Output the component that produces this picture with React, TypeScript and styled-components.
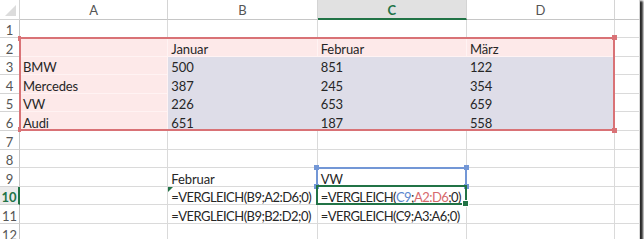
import React from "react";
import styled, { createGlobalStyle, css } from "styled-components";

const Global = createGlobalStyle`
  html, body { margin: 0; padding: 0; background: #ffffff; }
  body { font-family: Lato, "Open Sans", sans-serif; }
`;

const Frame = styled.div`
  width: 640px;
  height: 239px;
  overflow: hidden;
  background: #fff;
  box-shadow: 2px 2px 2px 1px #2a2a2a;
`;

const Sheet = styled.div`
  display: grid;
  grid-template-columns: 20px 148.3px 149.4px 149.2px 148.3px 25px;
  grid-template-rows: 19.5px repeat(12, 18.6px);
  position: relative;
`;

const Corner = styled.div`
  position: relative;
  box-sizing: border-box;
  border-right: 1px solid #d4d4d4;
  border-bottom: 1px solid #d4d4d4;
  background: #fff;
  &::after {
    content: "";
    position: absolute;
    right: 3px;
    bottom: 3px;
    width: 0;
    height: 0;
    border-left: 11px solid transparent;
    border-bottom: 11px solid #dcdcdc;
  }
`;

const ColHead = styled.div<{ $active?: boolean }>`
  box-sizing: border-box;
  display: flex;
  align-items: flex-end;
  justify-content: center;
  padding-bottom: 2px;
  line-height: 13px;
  font-size: 13px;
  color: #555;
  background: #fff;
  border-right: 1px solid #d4d4d4;
  border-bottom: 1px solid #c6c6c6;
  ${(p) =>
    p.$active &&
    css`
      background: #e1e1e1;
      color: #217346;
      font-weight: 700;
      border-bottom: 2px solid #217346;
      padding-bottom: 1px;
    `}
`;

const RowHead = styled.div<{ $active?: boolean }>`
  box-sizing: border-box;
  display: flex;
  align-items: flex-end;
  justify-content: center;
  line-height: 13px;
  padding-bottom: 0;
  font-size: 13px;
  color: #555;
  background: #fff;
  border-right: 1px solid #c6c6c6;
  border-bottom: 1px solid #d4d4d4;
  ${(p) =>
    p.$active &&
    css`
      background: #ececec;
      color: #217346;
      font-weight: 700;
      border-right: 2px solid #217346;
    `}
`;

type Fill = "none" | "pink" | "lav";

const Cell = styled.div<{ $fill?: Fill; $formula?: boolean }>`
  box-sizing: border-box;
  position: relative;
  display: flex;
  align-items: flex-end;
  padding: 0 0 0 3px;
  line-height: 13px;
  font-size: 13px;
  letter-spacing: ${(p) => (p.$formula ? "-0.55px" : "-0.1px")};
  color: #262626;
  white-space: nowrap;
  overflow: visible;
  border-right: 1px solid #dadada;
  border-bottom: 1px solid #dadada;
  ${(p) =>
    p.$fill === "pink" &&
    css`
      background: #fde9e9;
      border-color: #fff3f3;
    `}
  ${(p) =>
    p.$fill === "lav" &&
    css`
      background: #dedde8;
      border-color: #dedde8;
    `}
`;

const ErrorMark = styled.span`
  position: absolute;
  left: 0;
  top: 0;
  width: 0;
  height: 0;
  border-top: 5px solid #217346;
  border-right: 5px solid transparent;
`;

const Ref = styled.span<{ $c: string }>`
  color: ${(p) => p.$c};
`;

const Box = styled.div<{ $r: string; $c: string; $color: string; $w: number }>`
  grid-row: ${(p) => p.$r};
  grid-column: ${(p) => p.$c};
  position: relative;
  z-index: 2;
  pointer-events: none;
  margin: -1.5px 0 0 -1.5px;
  border: ${(p) => p.$w}px solid ${(p) => p.$color};
`;

const Handle = styled.span<{ $color: string; $pos: string }>`
  position: absolute;
  width: 5px;
  height: 5px;
  background: ${(p) => p.$color};
  ${(p) => p.$pos}
`;

const FillHandle = styled.span`
  position: absolute;
  right: -4px;
  bottom: -4px;
  width: 5px;
  height: 5px;
  background: #217346;
  border: 1px solid #fff;
`;

const cols = ["A", "B", "C", "D", ""];

type Row = { n: number; cells: React.ReactNode[]; fills?: Fill[] };

const rows: Row[] = [
  { n: 1, cells: ["", "", "", "", ""] },
  { n: 2, cells: ["", "Januar", "Februar", "März", ""], fills: ["pink", "pink", "pink", "pink", "none"] },
  { n: 3, cells: ["BMW", "500", "851", "122", ""], fills: ["pink", "lav", "lav", "lav", "none"] },
  { n: 4, cells: ["Mercedes", "387", "245", "354", ""], fills: ["pink", "lav", "lav", "lav", "none"] },
  { n: 5, cells: ["VW", "226", "653", "659", ""], fills: ["pink", "lav", "lav", "lav", "none"] },
  { n: 6, cells: ["Audi", "651", "187", "558", ""], fills: ["pink", "lav", "lav", "lav", "none"] },
  { n: 7, cells: ["", "", "", "", ""] },
  { n: 8, cells: ["", "", "", "", ""] },
  { n: 9, cells: ["", "Februar", "VW", "", ""] },
  {
    n: 10,
    cells: [
      "",
      <>
        <ErrorMark />
        =VERGLEICH(B9;A2:D6;0)
      </>,
      <>
        =VERGLEICH(<Ref $c="#5b87cf">C9</Ref>;<Ref $c="#d7696c">A2:D6</Ref>;0)
      </>,
      "",
      "",
    ],
  },
  { n: 11, cells: ["", "=VERGLEICH(B9;B2:D2;0)", "=VERGLEICH(C9;A3:A6;0)", "", ""] },
  { n: 12, cells: ["", "", "", "", ""] },
];

export default function App() {
  return (
    <>
      <Global />
      <Frame>
        <Sheet>
          <Corner />
          {cols.map((c, i) => (
            <ColHead key={i} $active={c === "C"}>
              {c}
            </ColHead>
          ))}
          {rows.map((r) => (
            <React.Fragment key={r.n}>
              <RowHead $active={r.n === 10}>{r.n}</RowHead>
              {r.cells.map((v, i) => (
                <Cell
                  key={i}
                  $fill={r.fills ? r.fills[i] : "none"}
                  $formula={r.n >= 10}
                  style={{ gridRow: r.n + 1, gridColumn: i + 2 }}
                >
                  {v}
                </Cell>
              ))}
            </React.Fragment>
          ))}
          <Box $r="3 / 8" $c="2 / 6" $color="#d97276" $w={2}>
            <Handle $color="#d97276" $pos="left:-3px;top:-3px;width:3px;" />
            <Handle $color="#d97276" $pos="right:-4px;top:-4px;" />
            <Handle $color="#d97276" $pos="left:-3px;bottom:-3px;width:3px;" />
            <Handle $color="#d97276" $pos="right:-4px;bottom:-4px;" />
          </Box>
          <Box $r="10 / 11" $c="4 / 5" $color="#7397d6" $w={2}>
            <Handle $color="#7397d6" $pos="left:-4px;top:-4px;" />
            <Handle $color="#7397d6" $pos="right:-4px;top:-4px;" />
            <Handle $color="#7397d6" $pos="left:-4px;bottom:-4px;" />
            <Handle $color="#7397d6" $pos="right:-4px;bottom:-4px;" />
          </Box>
          <Box $r="11 / 12" $c="4 / 5" $color="#217346" $w={2}>
            <FillHandle />
          </Box>
        </Sheet>
      </Frame>
    </>
  );
}
